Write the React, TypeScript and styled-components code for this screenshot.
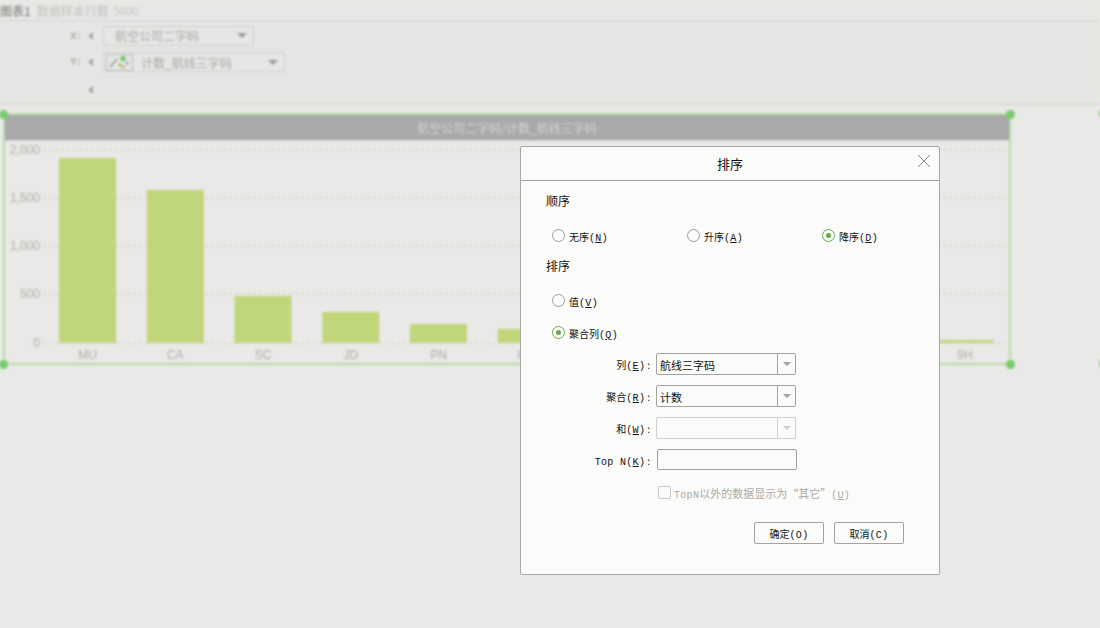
import React from "react";
import styled, { createGlobalStyle } from "styled-components";

const CJK = `"Noto Sans CJK SC", "Liberation Sans", sans-serif`;
const MONO = `"Liberation Mono", "Noto Sans CJK SC", monospace`;

const GlobalStyle = createGlobalStyle`
  html, body { margin: 0; padding: 0; }
  body { width: 1100px; height: 628px; overflow: hidden; background: #e9e9e7; font-family: ${CJK}; }
`;

const Screen = styled.div`
  position: relative;
  width: 1100px;
  height: 628px;
  overflow: hidden;
  background: #e9e9e7;
`;

const Backdrop = styled.div`
  width: 1100px;
  height: 628px;
  filter: blur(0.8px);
  color: #adadab;
`;

const TopBar = styled.div`
  height: 20px;
  display: flex;
  align-items: center;
  gap: 6px;
  font-size: 12px;
  border-bottom: 2px solid #dcdcda;
  background: #e7e7e5;
`;

const TopTitle = styled.span`
  color: #7e7e7c;
`;

const TopMeta = styled.span`
  color: #c4c4c2;
`;

const TopCount = styled.span`
  color: #c8c8c6;
  font-size: 11px;
  margin-left: -1px;
`;

const AxisPanel = styled.div`
  height: 80px;
  padding-top: 1px;
  background: #e6e6e4;
  border-bottom: 2px solid #d9d9d7;
`;

const AxisRow = styled.div`
  height: 27px;
  padding-left: 70px;
  display: flex;
  align-items: center;
  border-bottom: 1px solid #e0e0de;
  box-sizing: border-box;
  &:first-child { height: 26px; }
  &:last-child { border-bottom: none; }
`;

const AxisLabel = styled.span`
  width: 18px;
  font: bold 11px ${MONO};
  letter-spacing: -1px;
  color: #b2b2b0;
`;

const CollapseArrow = styled.i`
  width: 0;
  height: 0;
  margin-right: 10px;
  border-style: solid;
  border-width: 4px 5px 4px 0;
  border-color: transparent #a8a8a6 transparent transparent;
`;

const Picker = styled.div<{ $width: number }>`
  width: ${(p) => p.$width}px;
  height: 20px;
  box-sizing: border-box;
  display: flex;
  align-items: center;
  gap: 8px;
  border: 1px solid #cfcfcd;
  border-radius: 2px;
  font-size: 12px;
  color: #adadab;
  padding: 0 6px 0 2px;
`;

const PickerText = styled.span<{ $indent?: number }>`
  flex: 1;
  padding-left: ${(p) => p.$indent ?? 0}px;
`;

const PickerCaret = styled.i`
  width: 0;
  height: 0;
  border-style: solid;
  border-width: 5px 5px 0;
  border-color: #9c9c9a transparent transparent;
`;

const ChartIconBox = styled.span`
  width: 27px;
  height: 17px;
  box-sizing: border-box;
  border: 1px solid #bcbcba;
  display: flex;
  align-items: center;
  justify-content: center;
`;

const Widget = styled.div`
  position: relative;
  margin: 8px 0 0 3px;
  width: 1008px;
  height: 252px;
  box-sizing: border-box;
  border: 2px solid #b6dba8;
`;

const Handle = styled.i<{ $x: string; $y: string }>`
  position: absolute;
  width: 9px;
  height: 9px;
  border-radius: 50%;
  background: #79cc6c;
  ${(p) => p.$x}: ${(p) => (p.$x === "left" ? "-6.5px" : "-5.5px")};
  ${(p) => p.$y}: -5.5px;
`;

const ChartTitle = styled.div`
  height: 25px;
  background: #a9a9a9;
  color: #d4d4d4;
  font-size: 12px;
  display: flex;
  align-items: center;
  justify-content: center;
  border-bottom: 1px solid #d0d0ce;
`;

const EdgeHandle = styled.i<{ $top: number }>`
  position: absolute;
  right: -8px;
  top: ${(p) => p.$top}px;
  width: 9px;
  height: 9px;
  border-radius: 50%;
  background: #8ac97e;
`;

const Dialog = styled.div`
  position: absolute;
  left: 520px;
  top: 146px;
  width: 420px;
  height: 429px;
  box-sizing: border-box;
  background: #fbfbf9;
  border: 1px solid #a8a8a6;
  border-radius: 2px;
  color: #111;
  font-size: 11px;
`;

const DialogHead = styled.div`
  position: relative;
  height: 34px;
  box-sizing: border-box;
  border-bottom: 1px solid #a0a09e;
  display: flex;
  align-items: center;
  justify-content: center;
  font-size: 13px;
`;

const CloseButton = styled.svg`
  position: absolute;
  right: 8px;
  top: 7px;
`;

const DialogBody = styled.div`
  padding: 12px 0 0 25px;
`;

const GroupTitle = styled.div<{ $top?: number }>`
  height: 16px;
  line-height: 16px;
  font-size: 12px;
  margin-top: ${(p) => p.$top ?? 0}px;
`;

const RadioRow = styled.div<{ $top: number }>`
  display: flex;
  margin-top: ${(p) => p.$top}px;
  padding-left: 6px;
  height: 14px;
  align-items: center;
`;

const RadioItem = styled.label<{ $width?: number }>`
  display: flex;
  align-items: center;
  gap: 4px;
  width: ${(p) => (p.$width ? `${p.$width}px` : "auto")};
`;

const RadioDot = styled.span<{ $on?: boolean }>`
  width: 13px;
  height: 13px;
  margin-top: -1px;
  box-sizing: border-box;
  border-radius: 50%;
  background: #fbfbf9;
  border: 1px solid ${(p) => (p.$on ? "#6aa84f" : "#9a9a98")};
  display: flex;
  align-items: center;
  justify-content: center;
  &::after {
    content: "";
    width: 5px;
    height: 5px;
    border-radius: 50%;
    background: ${(p) => (p.$on ? "#6aa84f" : "transparent")};
  }
`;

const Label = styled.span<{ $muted?: boolean }>`
  font-size: ${(p) => (p.$muted ? 11 : 10)}px;
  white-space: nowrap;
  color: ${(p) => (p.$muted ? "#aaaaa8" : "#111")};
`;

const Key = styled.span`
  font-family: ${MONO};
  font-size: 10px;
  letter-spacing: 0.3px;
  u { text-underline-offset: 1px; }
`;

const FormGrid = styled.div`
  margin: 13px 0 0 0;
  display: grid;
  grid-template-columns: 110px auto;
  row-gap: 10px;
  justify-content: start;
`;

const FieldLabel = styled.div`
  height: 22px;
  display: flex;
  align-items: center;
  justify-content: flex-end;
  gap: 2px;
  padding-right: 6px;
  font-size: 10px;
  color: #111;
`;

const SelectBox = styled.div<{ $disabled?: boolean }>`
  width: 140px;
  height: 22px;
  box-sizing: border-box;
  border: 1px solid ${(p) => (p.$disabled ? "#cfcfcd" : "#a2a2a0")};
  border-radius: 2px;
  display: flex;
  align-items: center;
  font-size: 11px;
  padding-left: 3px;
`;

const SelectValue = styled.span`
  flex: 1;
  padding-top: 2px;
`;

const SelectArrow = styled.span<{ $disabled?: boolean }>`
  width: 18px;
  height: 100%;
  box-sizing: border-box;
  border-left: 1px solid ${(p) => (p.$disabled ? "#cfcfcd" : "#a2a2a0")};
  display: flex;
  align-items: center;
  justify-content: center;
  &::after {
    content: "";
    border-style: solid;
    border-width: 4px 4px 0;
    border-color: ${(p) => (p.$disabled ? "#cfcfcd" : "#a2a2a0")} transparent transparent;
  }
`;

const TextBox = styled.div`
  width: 140px;
  height: 21px;
  margin-left: 1px;
  box-sizing: border-box;
  border: 1px solid #a2a2a0;
  border-radius: 2px;
`;

const CheckRow = styled.div`
  margin: 15px 0 0 112px;
  display: flex;
  align-items: center;
  gap: 3px;
  height: 14px;
`;

const CheckBox = styled.span`
  width: 13px;
  height: 13px;
  margin-top: -2px;
  box-sizing: border-box;
  border: 1px solid #c8c8c6;
  border-radius: 2px;
`;

const ButtonRow = styled.div`
  margin: 22px 35px 0 0;
  display: flex;
  justify-content: flex-end;
  gap: 10px;
`;

const DialogButton = styled.button`
  width: 70px;
  height: 22px;
  padding: 0;
  background: transparent;
  border: 1px solid #a2a2a0;
  border-radius: 2px;
  color: #111;
  font-family: ${CJK};
  font-size: 10px;
`;

const ChartSvg = styled.svg`
  display: block;
  text {
    font-family: "Liberation Sans", sans-serif;
    font-size: 12px;
    fill: #aeaeac;
  }
`;

// one slot per airline, left to right; the ones behind the dialog have no visible label
const bars = [
  { top: 158, name: "MU" },
  { top: 190, name: "CA" },
  { top: 296, name: "SC" },
  { top: 312, name: "JD" },
  { top: 324, name: "PN" },
  { top: 329, name: "HU" },
  { top: 332, name: "" },
  { top: 334, name: "" },
  { top: 336, name: "" },
  { top: 338, name: "" },
  { top: 340, name: "9H" },
];

const SLOT = 87.75;
const BAR_WIDTH = 57;

const ticks = [
  { y: 150, label: "2,000" },
  { y: 198, label: "1,500" },
  { y: 246, label: "1,000" },
  { y: 294, label: "500" },
  { y: 343, label: "0" },
];

// plot coordinates are page coordinates shifted by the widget's content origin
const Chart = () => (
  <ChartSvg width="1004" height="222" viewBox="5 141 1004 222">
    {ticks.map((t) => (
      <g key={t.label}>
        <line x1="43" x2="1007" y1={t.y} y2={t.y} stroke="#c9c9c7" strokeDasharray="3 3" />
        <text x="40" y={t.y + 4} textAnchor="end">{t.label}</text>
      </g>
    ))}
    {bars.map((b, i) => {
      const x = 59 + SLOT * i;
      return (
        <g key={i}>
          <rect x={x} y={b.top} width={BAR_WIDTH} height={343 - b.top} fill="#c0d67b" />
          <text x={x + BAR_WIDTH / 2} y={359} textAnchor="middle">{b.name}</text>
        </g>
      );
    })}
  </ChartSvg>
);

const ChartGlyph = () => (
  <svg width="23" height="15" viewBox="0 0 23 15">
    <path d="M2 12 L9 4" stroke="#8f8f8d" strokeWidth="1.4" />
    <circle cx="15" cy="3.5" r="2.6" fill="#6fc060" />
    <circle cx="12" cy="10" r="1.8" fill="#86c87e" />
    <circle cx="15.5" cy="12" r="1.8" fill="#e8ab7c" />
    <circle cx="19" cy="8" r="1.8" fill="#88b4dc" />
  </svg>
);

const Hotkey = ({ k }: { k: string }) => (
  <Key>(<u>{k}</u>)</Key>
);

const Radio = ({ text, k, on, width }: { text: string; k: string; on?: boolean; width?: number }) => (
  <RadioItem $width={width}>
    <RadioDot $on={on} />
    <Label>{text}<Hotkey k={k} /></Label>
  </RadioItem>
);

export default function App() {
  return (
    <Screen>
      <GlobalStyle />
      <Backdrop>
        <TopBar>
          <TopTitle>图表1</TopTitle>
          <TopMeta>数据样本行数</TopMeta>
          <TopCount>5000</TopCount>
        </TopBar>
        <AxisPanel>
          <AxisRow>
            <AxisLabel>X:</AxisLabel>
            <CollapseArrow />
            <Picker $width={151}>
              <PickerText $indent={9}>航空公司二字码</PickerText>
              <PickerCaret />
            </Picker>
          </AxisRow>
          <AxisRow>
            <AxisLabel>Y:</AxisLabel>
            <CollapseArrow />
            <Picker $width={182}>
              <ChartIconBox><ChartGlyph /></ChartIconBox>
              <PickerText>计数_航线三字码</PickerText>
              <PickerCaret />
            </Picker>
          </AxisRow>
          <AxisRow>
            <AxisLabel />
            <CollapseArrow />
          </AxisRow>
        </AxisPanel>
        <Widget>
          <Handle $x="left" $y="top" />
          <Handle $x="right" $y="top" />
          <Handle $x="left" $y="bottom" />
          <Handle $x="right" $y="bottom" />
          <ChartTitle>航空公司二字码/计数_航线三字码</ChartTitle>
          <Chart />
        </Widget>
        <EdgeHandle $top={109} />
        <EdgeHandle $top={359} />
      </Backdrop>
      <Dialog>
        <DialogHead>
          排序
          <CloseButton width="14" height="14" viewBox="0 0 14 14">
            <path d="M1 1 L13 13 M13 1 L1 13" stroke="#8a8a88" strokeWidth="1" fill="none" />
          </CloseButton>
        </DialogHead>
        <DialogBody>
          <GroupTitle>顺序</GroupTitle>
          <RadioRow $top={20}>
            <Radio text="无序" k="N" width={135} />
            <Radio text="升序" k="A" width={135} />
            <Radio text="降序" k="D" on />
          </RadioRow>
          <GroupTitle $top={15}>排序</GroupTitle>
          <RadioRow $top={20}>
            <Radio text="值" k="V" />
          </RadioRow>
          <RadioRow $top={18}>
            <Radio text="聚合列" k="Q" on />
          </RadioRow>
          <FormGrid>
            <FieldLabel><span>列<Hotkey k="E" /></span><span>:</span></FieldLabel>
            <SelectBox><SelectValue>航线三字码</SelectValue><SelectArrow /></SelectBox>
            <FieldLabel><span>聚合<Hotkey k="R" /></span><span>:</span></FieldLabel>
            <SelectBox><SelectValue>计数</SelectValue><SelectArrow /></SelectBox>
            <FieldLabel><span>和<Hotkey k="W" /></span><span>:</span></FieldLabel>
            <SelectBox $disabled><SelectValue /><SelectArrow $disabled /></SelectBox>
            <FieldLabel><span><Key>Top N</Key><Hotkey k="K" /></span><span>:</span></FieldLabel>
            <TextBox />
          </FormGrid>
          <CheckRow>
            <CheckBox />
            <Label $muted><Key>TopN</Key>以外的数据显示为“其它”<Hotkey k="U" /></Label>
          </CheckRow>
          <ButtonRow>
            <DialogButton>确定<Key>(O)</Key></DialogButton>
            <DialogButton>取消<Key>(C)</Key></DialogButton>
          </ButtonRow>
        </DialogBody>
      </Dialog>
    </Screen>
  );
}
